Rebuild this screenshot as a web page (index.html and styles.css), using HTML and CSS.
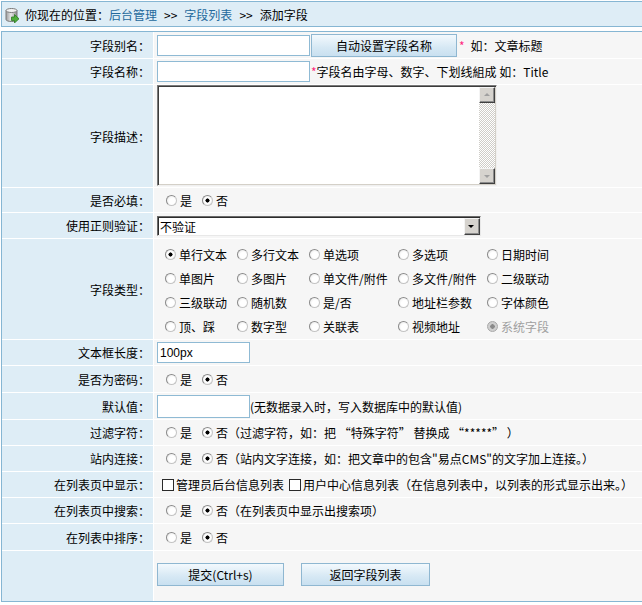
FILE: index.html
```html
<!DOCTYPE html>
<html lang="zh-CN">

<head>
    <meta charset="UTF-8">
    <title>添加字段</title>
    <link rel="stylesheet" href="styles.css">
</head>

<body>
    <div class="page">
        <div class="crumb">
            <svg class="crumb-icon" width="16" height="16" viewBox="0 0 16 16">
                <defs>
                    <linearGradient id="db" x1="0" x2="1" y1="0" y2="0">
                        <stop offset="0" stop-color="#9c9c9c" />
                        <stop offset="0.45" stop-color="#e6e6e6" />
                        <stop offset="1" stop-color="#8a8a8a" />
                    </linearGradient>
                </defs>
                <path d="M2 3.5 v9 a5.5 2 0 0 0 11 0 v-9" fill="url(#db)" stroke="#7a7a7a" />
                <ellipse cx="7.5" cy="3.5" rx="5.5" ry="2" fill="#f2f2f2" stroke="#7a7a7a" />
                <polygon points="7.5,10 10.5,10 10.5,7.5 15,11.8 10.5,16 10.5,13.6 7.5,13.6" fill="#4fae3b" stroke="#2c7a22" stroke-width="0.8" />
            </svg>
            <span>你现在的位置：</span><a href="#">后台管理</a><span class="sep">&gt;&gt;</span><a href="#">字段列表</a><span class="sep">&gt;&gt;</span><span>添加字段</span>
        </div>

        <div class="form">
            <div class="lbl r1">字段别名：</div>
            <div class="val r1">
                <input class="txt w152" type="text">
                <button class="btn auto">自动设置字段名称</button>
                <span class="star">*</span><span class="tip-gap">如：文章标题</span>
            </div>

            <div class="lbl r2">字段名称：</div>
            <div class="val r2">
                <input class="txt w152" type="text">
                <span class="star">*</span>字段名由字母、数字、下划线組成 如：Title
            </div>

            <div class="lbl r3">字段描述：</div>
            <div class="val r3">
                <div class="memo">
                    <textarea></textarea>
                    <div class="sbar">
                        <span class="sb-btn up"></span>
                        <span class="sb-track"></span>
                        <span class="sb-btn down"></span>
                    </div>
                </div>
            </div>

            <div class="lbl r4">是否必填：</div>
            <div class="val r4">
                <label class="opt"><input class="rd" type="radio" name="req">是</label>
                <label class="opt"><input class="rd" type="radio" name="req" checked>否</label>
            </div>

            <div class="lbl r5">使用正则验证：</div>
            <div class="val r5">
                <div class="select">
                    <span class="select-text">不验证</span>
                    <span class="select-arrow"></span>
                </div>
            </div>

            <div class="lbl r6">字段类型：</div>
            <div class="val r6">
                <div class="types">
                    <label class="type"><input class="rd" type="radio" name="ft" checked>单行文本</label>
                    <label class="type"><input class="rd" type="radio" name="ft">多行文本</label>
                    <label class="type"><input class="rd" type="radio" name="ft">单选项</label>
                    <label class="type"><input class="rd" type="radio" name="ft">多选项</label>
                    <label class="type"><input class="rd" type="radio" name="ft">日期时间</label>

                    <label class="type"><input class="rd" type="radio" name="ft">单图片</label>
                    <label class="type"><input class="rd" type="radio" name="ft">多图片</label>
                    <label class="type"><input class="rd" type="radio" name="ft">单文件/附件</label>
                    <label class="type"><input class="rd" type="radio" name="ft">多文件/附件</label>
                    <label class="type"><input class="rd" type="radio" name="ft">二级联动</label>

                    <label class="type"><input class="rd" type="radio" name="ft">三级联动</label>
                    <label class="type"><input class="rd" type="radio" name="ft">随机数</label>
                    <label class="type"><input class="rd" type="radio" name="ft">是/否</label>
                    <label class="type"><input class="rd" type="radio" name="ft">地址栏参数</label>
                    <label class="type"><input class="rd" type="radio" name="ft">字体颜色</label>

                    <label class="type"><input class="rd" type="radio" name="ft">顶、踩</label>
                    <label class="type"><input class="rd" type="radio" name="ft">数字型</label>
                    <label class="type"><input class="rd" type="radio" name="ft">关联表</label>
                    <label class="type"><input class="rd" type="radio" name="ft">视频地址</label>
                    <label class="type off"><input class="rd" type="radio" name="ft" disabled>系统字段</label>
                </div>
            </div>

            <div class="lbl r7">文本框长度：</div>
            <div class="val r7">
                <input class="txt w92" type="text" value="100px">
            </div>

            <div class="lbl r8">是否为密码：</div>
            <div class="val r8">
                <label class="opt"><input class="rd" type="radio" name="pwd">是</label>
                <label class="opt"><input class="rd" type="radio" name="pwd" checked>否</label>
            </div>

            <div class="lbl r9">默认值：</div>
            <div class="val r9">
                <input class="txt w92 tall" type="text">(无数据录入时，写入数据库中的默认值)
            </div>

            <div class="lbl r10">过滤字符：</div>
            <div class="val r10">
                <label class="opt"><input class="rd" type="radio" name="flt">是</label>
                <label class="opt"><input class="rd" type="radio" name="flt" checked>否</label>
                <span>（过滤字符，如：把 “特殊字符” 替换成 “*****” ）</span>
            </div>

            <div class="lbl r11">站内连接：</div>
            <div class="val r11">
                <label class="opt"><input class="rd" type="radio" name="lnk">是</label>
                <label class="opt"><input class="rd" type="radio" name="lnk" checked>否</label>
                <span>（站内文字连接，如：把文章中的包含"易点CMS"的文字加上连接。）</span>
            </div>

            <div class="lbl r12">在列表页中显示：</div>
            <div class="val r12">
                <label class="chk-opt"><input class="ck" type="checkbox">管理员后台信息列表</label>
                <label class="chk-opt"><input class="ck" type="checkbox">用户中心信息列表</label>
                <span>（在信息列表中，以列表的形式显示出来。）</span>
            </div>

            <div class="lbl r13">在列表页中搜索：</div>
            <div class="val r13">
                <label class="opt"><input class="rd" type="radio" name="srch">是</label>
                <label class="opt"><input class="rd" type="radio" name="srch" checked>否</label>
                <span>（在列表页中显示出搜索项）</span>
            </div>

            <div class="lbl r14">在列表中排序：</div>
            <div class="val r14">
                <label class="opt"><input class="rd" type="radio" name="sort">是</label>
                <label class="opt"><input class="rd" type="radio" name="sort" checked>否</label>
            </div>

            <div class="lbl r15"></div>
            <div class="val r15">
                <button class="btn submit">提交(Ctrl+s)</button>
                <button class="btn back">返回字段列表</button>
            </div>
        </div>
    </div>
</body>

</html>
```

FILE: styles.css
```css
html {
    overflow: hidden;
}

body {
    margin: 0;
    background-color: #fff;
    font-family: "Noto Sans CJK SC", "Liberation Sans", sans-serif;
    font-size: 12px;
    color: #000;
}

.page {
    width: 660px;
    padding: 1px 0 0 1px;
}

/* breadcrumb */

.crumb {
    display: flex;
    align-items: center;
    height: 24px;
    border: 1px solid #86b6d3;
    background-color: #deedf6;
    padding-left: 2px;
    white-space: nowrap;
}

.crumb-icon {
    margin: 1px 5px 0 0;
}

.crumb a {
    color: #24699c;
    text-decoration: none;
}

.crumb .sep {
    margin: 0 7px;
}

/* form grid */

.form {
    margin-top: 4px;
    display: grid;
    grid-template-columns: 151px 1fr;
    gap: 1px;
    border: 1px solid #86b6d3;
    border-right: none;
    background-color: #fff;
}

.lbl {
    display: flex;
    align-items: center;
    justify-content: flex-end;
    padding-right: 3px;
    background-color: #deedf6;
    white-space: nowrap;
}

.val {
    display: flex;
    align-items: center;
    padding-left: 3px;
    background-color: #f6f6f6;
    white-space: nowrap;
}

.r1 { height: 26px; }
.r2 { height: 25px; }
.r3 { height: 102px; }
.r4 { height: 24px; }
.r5 { height: 25px; }
.r6 { height: 100px; }
.r7 { height: 25px; }
.r8 { height: 26px; }
.r9 { height: 26px; }
.r10 { height: 25px; }
.r11 { height: 25px; }
.r12 { height: 25px; }
.r13 { height: 25px; }
.r14 { height: 26px; }
.r15 { height: 50px; }

.val.r3 {
    align-items: flex-start;
}

.val.r15 {
    padding-bottom: 4px;
    box-sizing: border-box;
}

/* inputs */

.txt {
    box-sizing: border-box;
    height: 21px;
    margin: 0;
    padding: 1px 2px 0;
    border: 1px solid #8fbad4;
    background-color: #fff;
    font-family: "Liberation Sans", "Noto Sans CJK SC", sans-serif;
    font-size: 12px;
    outline: none;
}

.w152 {
    width: 153px;
}

.w92 {
    width: 93px;
}

.tall {
    height: 23px;
}

.btn {
    box-sizing: border-box;
    height: 23px;
    margin: 0;
    padding: 0;
    border: 1px solid #8fb7d1;
    background: linear-gradient(#f3f9fd, #d6e8f4 60%, #c9e0f0);
    font-family: "Noto Sans CJK SC", "Liberation Sans", sans-serif;
    font-size: 12px;
    color: #000;
}

.auto {
    width: 146px;
    margin-left: 1px;
}

.submit {
    width: 127px;
}

.back {
    width: 129px;
    margin-left: 17px;
}

.star {
    color: #ff2a7f;
    margin-left: 2px;
}

.tip-gap {
    margin-left: 6px;
}

.val.r2 .star {
    margin-left: 1px;
}

/* textarea with classic scrollbar */

.memo {
    display: flex;
    width: 340px;
    height: 101px;
    box-sizing: border-box;
    border: 1px solid;
    border-color: #7a7a7a #f0f0f0 #f0f0f0 #7a7a7a;
    box-shadow: inset 1px 1px #3c3c3c, inset -1px -1px #d4d0c8;
    background-color: #fff;
}

.memo textarea {
    flex: 1;
    margin: 1px 0 1px 1px;
    border: none;
    resize: none;
    outline: none;
    background: transparent;
}

.sbar {
    display: flex;
    flex-direction: column;
    width: 16px;
    margin: 1px 1px 1px 0;
}

.sb-btn {
    position: relative;
    box-sizing: border-box;
    height: 16px;
    border: 1px solid;
    border-color: #f4f4f4 #404040 #404040 #f4f4f4;
    box-shadow: inset -1px -1px #8c8c8c;
    background-color: #d6d3ce;
}

.sb-btn::before {
    content: "";
    position: absolute;
    left: 4px;
    top: 5px;
    border-left: 3px solid transparent;
    border-right: 3px solid transparent;
}

.sb-btn.up::before {
    border-bottom: 3px solid #a0a0a0;
}

.sb-btn.down::before {
    top: 6px;
    border-top: 3px solid #a0a0a0;
}

.sb-track {
    flex: 1;
    background-color: #fff;
    background-image: repeating-conic-gradient(#cfcdc8 0 25%, #fff 0 50%);
    background-size: 2px 2px;
}

/* select */

.select {
    display: flex;
    box-sizing: border-box;
    width: 324px;
    height: 20px;
    border: 1px solid;
    border-color: #6a6a6a #e8e8e8 #e8e8e8 #6a6a6a;
    box-shadow: inset 1px 1px #2c2c2c;
    background-color: #fff;
}

.select-text {
    flex: 1;
    padding: 1px 0 0 2px;
    line-height: 17px;
}

.select-arrow {
    position: relative;
    box-sizing: border-box;
    width: 16px;
    margin: 1px 0 0 0;
    border: 1px solid;
    border-color: #f4f4f4 #404040 #404040 #f4f4f4;
    box-shadow: inset -1px -1px #8c8c8c;
    background-color: #d6d3ce;
}

.select-arrow::before {
    content: "";
    position: absolute;
    left: 3px;
    top: 6px;
    border-left: 3px solid transparent;
    border-right: 3px solid transparent;
    border-top: 3px solid #000;
}

/* radios and checkboxes */

.rd {
    appearance: none;
    -webkit-appearance: none;
    box-sizing: border-box;
    width: 11px;
    height: 11px;
    margin: 0 3px 0 0;
    border: 1px solid;
    border-color: #8a8a8a #c4c4c4 #c4c4c4 #8a8a8a;
    border-radius: 50%;
    background: radial-gradient(circle at 60% 60%, #fff 40%, #e4e4e4);
    flex-shrink: 0;
}

.rd:checked {
    background: radial-gradient(circle, #000 0 1.8px, #fff 2.3px 48%, #e4e4e4);
}

.rd:disabled {
    border-color: #a8a8a8;
    background: radial-gradient(circle, #8a8a8a 0 2px, #cfcfcf 2.5px);
}

.opt {
    display: flex;
    align-items: center;
    margin-left: 10px;
}

.opt:first-child {
    margin-left: 9px;
}

.types {
    display: grid;
    grid-template-columns: 72px 72px 89px 89px 80px;
    grid-auto-rows: 24px;
    margin-top: 2px;
}

.type {
    display: flex;
    align-items: center;
    padding-left: 8px;
}

.type.off {
    color: #a0a0a0;
}

.ck {
    appearance: none;
    -webkit-appearance: none;
    box-sizing: border-box;
    width: 12px;
    height: 12px;
    margin: 0 2px 0 0;
    border: 1px solid #2a2a2a;
    background-color: #fff;
}

.chk-opt {
    display: flex;
    align-items: center;
    margin-left: 5px;
}

.chk-opt:first-child {
    margin-left: 5px;
}
```
